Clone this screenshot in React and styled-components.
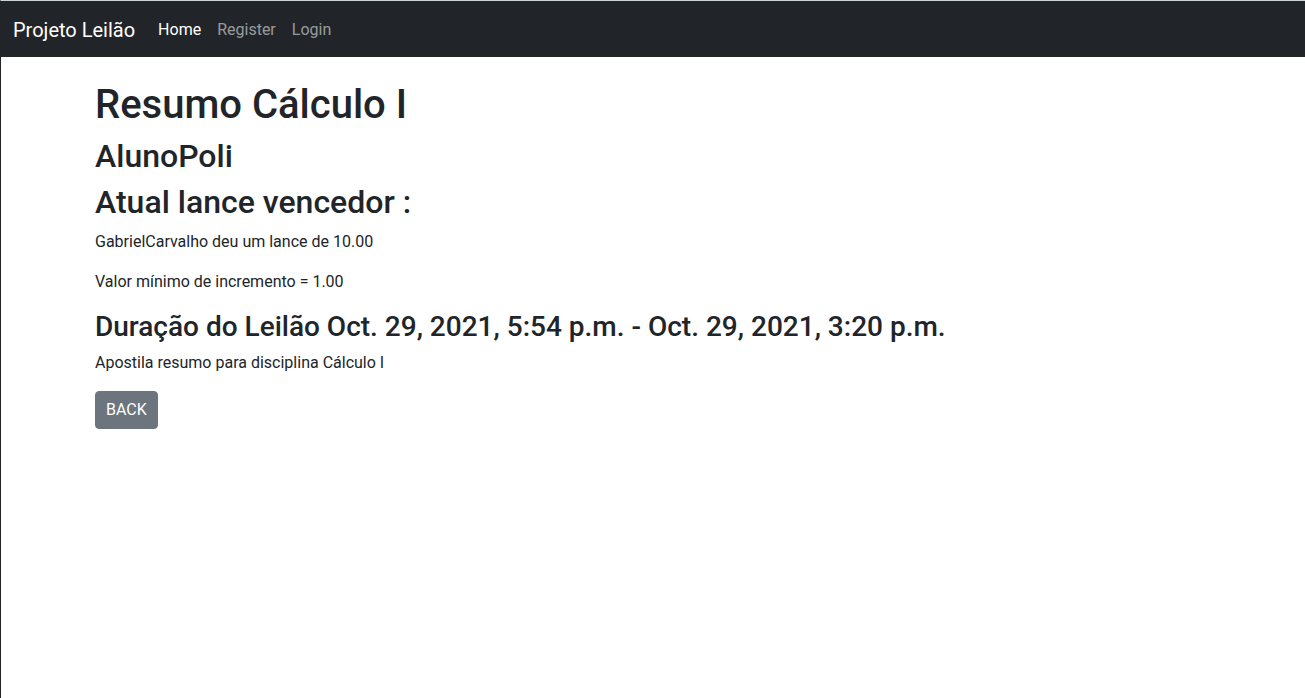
import React from "react";
import styled, { createGlobalStyle } from "styled-components";

const GlobalStyle = createGlobalStyle`
  *, *::before, *::after { box-sizing: border-box; }
  html, body { margin: 0; padding: 0; }
  body {
    font-family: Roboto, "Liberation Sans", sans-serif;
    font-size: 16px;
    line-height: 1.5;
    color: #212529;
    background: #fff;
  }
`;

const Frame = styled.div`
  min-height: 100vh;
  border-top: 1px solid #ccd5d5;
  border-left: 1px solid #212529;
`;

const Navbar = styled.nav`
  background: #212529;
  height: 56px;
  padding: 9px 12px 7px;
  display: flex;
  align-items: center;
`;

const Brand = styled.a`
  font-size: 20px;
  line-height: 30px;
  color: #fff;
  text-decoration: none;
  margin-right: 15px;
  white-space: nowrap;
`;

const NavList = styled.ul`
  display: flex;
  list-style: none;
  margin: 0;
  padding: 0;
`;

const NavLink = styled.a`
  display: block;
  padding: 8px;
  font-size: 16px;
  line-height: 24px;
  text-decoration: none;
  color: ${(p) => (p.$active ? "#fff" : "rgba(255,255,255,0.55)")};
`;

const Container = styled.main`
  max-width: 1140px;
  margin: 0 auto;
  padding: 24px 12px 0;
`;

const Heading = styled.h1`
  margin: 0 0 8px;
  font-weight: 500;
  line-height: 1.2;
  font-size: ${(p) => p.$size}px;
`;

const Text = styled.p`
  margin: 0 0 16px;
`;

const Button = styled.button`
  display: inline-block;
  font-family: inherit;
  font-size: 16px;
  line-height: 24px;
  padding: 6px 10px;
  border: 1px solid #6c757d;
  border-radius: 4px;
  background: #6c757d;
  color: #fff;
  cursor: pointer;
`;

export default function App() {
  return (
    <Frame>
      <GlobalStyle />
      <Navbar>
        <Brand href="#">Projeto Leilão</Brand>
        <NavList>
          <li><NavLink href="#" $active>Home</NavLink></li>
          <li><NavLink href="#">Register</NavLink></li>
          <li><NavLink href="#">Login</NavLink></li>
        </NavList>
      </Navbar>
      <Container>
        <Heading $size={40}>Resumo Cálculo I</Heading>
        <Heading as="h2" $size={32}>AlunoPoli</Heading>
        <Heading as="h2" $size={32}>Atual lance vencedor :</Heading>
        <Text>GabrielCarvalho deu um lance de 10.00</Text>
        <Text>Valor mínimo de incremento = 1.00</Text>
        <Heading as="h3" $size={28}>
          Duração do Leilão Oct. 29, 2021, 5:54 p.m. - Oct. 29, 2021, 3:20 p.m.
        </Heading>
        <Text>Apostila resumo para disciplina Cálculo I</Text>
        <Button type="button">BACK</Button>
      </Container>
    </Frame>
  );
}
